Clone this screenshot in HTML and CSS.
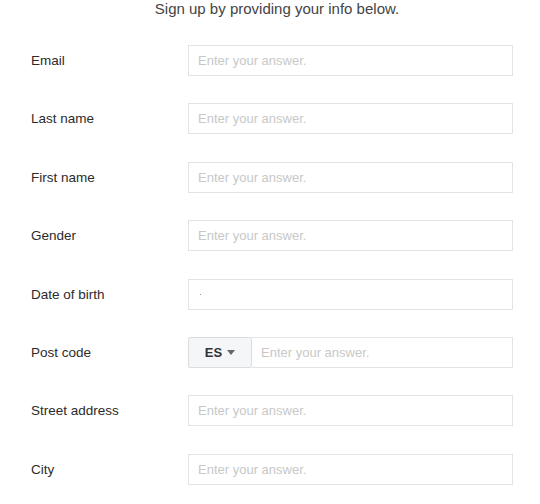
FILE: index.html
```html
<!DOCTYPE html>
<html>
<head>
<meta charset="utf-8">
<link rel="stylesheet" href="styles.css">
</head>
<body>
<div class="page">
  <div class="title">Sign up by providing your info below.</div>
  <div class="form">
    <div class="row"><div class="label">Email</div><div class="field"><span class="ph">Enter your answer.</span></div></div>
    <div class="row"><div class="label">Last name</div><div class="field"><span class="ph">Enter your answer.</span></div></div>
    <div class="row"><div class="label">First name</div><div class="field"><span class="ph">Enter your answer.</span></div></div>
    <div class="row"><div class="label">Gender</div><div class="field"><span class="ph">Enter your answer.</span></div></div>
    <div class="row"><div class="label">Date of birth</div><div class="field"><span class="dot"></span></div></div>
    <div class="row"><div class="label">Post code</div>
      <div class="combo">
        <div class="country">ES <span class="caret"></span></div>
        <div class="field grow"><span class="ph">Enter your answer.</span></div>
      </div>
    </div>
    <div class="row"><div class="label">Street address</div><div class="field"><span class="ph">Enter your answer.</span></div></div>
    <div class="row"><div class="label">City</div><div class="field"><span class="ph">Enter your answer.</span></div></div>
  </div>
</div>
</body>
</html>
```

FILE: styles.css
```css
html, body {
  margin: 0;
  padding: 0;
  background: #ffffff;
}
.page {
  width: 540px;
  font-family: "Liberation Sans", Arial, sans-serif;
}
.title {
  text-align: center;
  font-size: 15px;
  line-height: 18px;
  color: #444444;
  padding-top: 0;
  padding-left: 14px;
}
.form {
  display: flex;
  flex-direction: column;
  gap: 27.4px;
  padding-top: 27px;
}
.row {
  display: flex;
  align-items: center;
  height: 31px;
}
.label {
  width: 157px;
  padding-left: 31px;
  font-size: 13.5px;
  color: #2b2b2b;
}
.field {
  box-sizing: border-box;
  width: 325px;
  height: 31px;
  border: 1px solid #e3e3e3;
  display: flex;
  align-items: center;
  padding-left: 9px;
  background: #fff;
}
.ph {
  font-size: 13px;
  color: #c8c8c8;
}
.dot {
  width: 1px;
  height: 1px;
  background: #999;
  margin-left: 2px;
  margin-top: 1px;
}
.combo {
  display: flex;
  width: 325px;
  height: 31px;
}
.country {
  box-sizing: border-box;
  width: 64px;
  height: 31px;
  border: 1px solid #dcdcdc;
  border-radius: 2px;
  background: #f5f6f8;
  display: flex;
  align-items: center;
  justify-content: center;
  gap: 5px;
  font-size: 13px;
  font-weight: bold;
  color: #333;
}
.caret {
  width: 0;
  height: 0;
  border-left: 4px solid transparent;
  border-right: 4px solid transparent;
  border-top: 5px solid #666;
}
.field.grow {
  width: auto;
  flex: 1;
  border-left: none;
  margin-left: 0;
}
```
